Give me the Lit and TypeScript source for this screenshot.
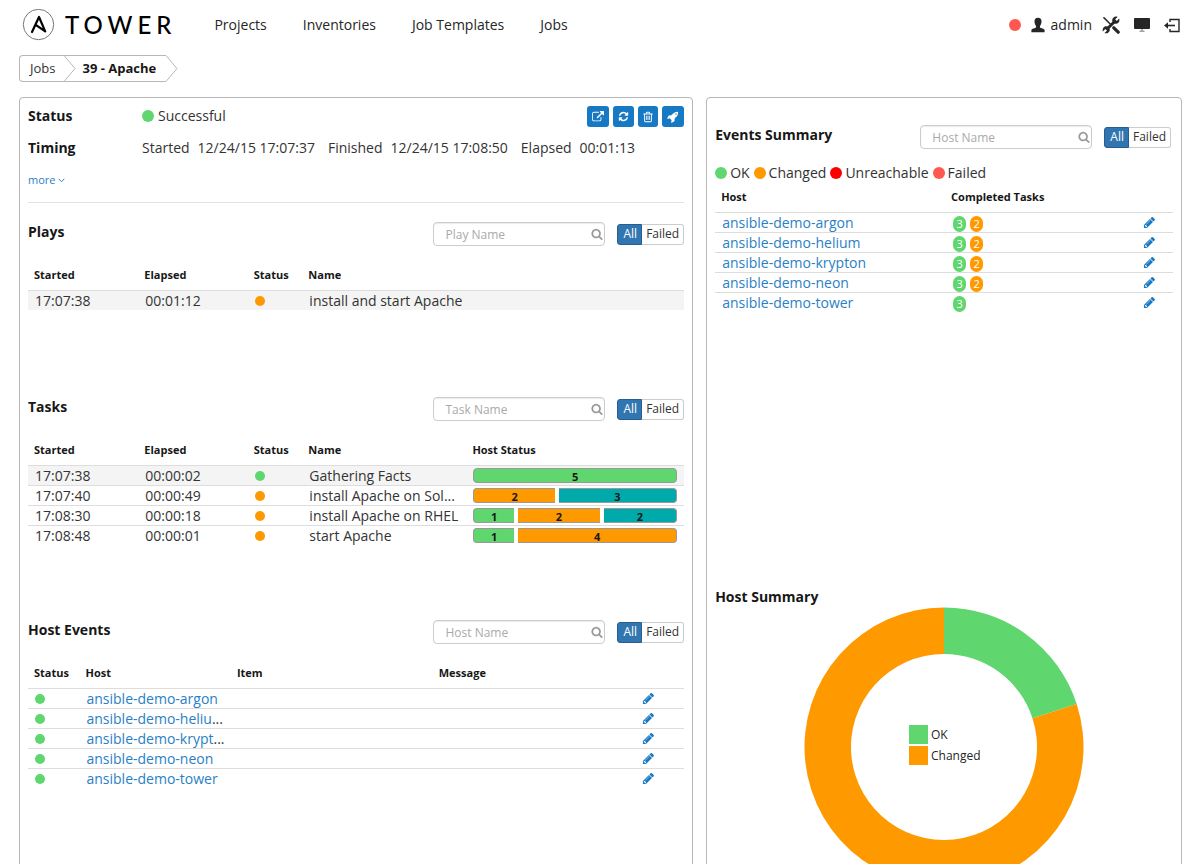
import { LitElement, html, css, svg, nothing } from "lit";
import { customElement, property } from "lit/decorators.js";
import { classMap } from "lit/directives/class-map.js";
import { styleMap } from "lit/directives/style-map.js";

type Tone = "ok" | "changed" | "unreachable" | "failed" | "skipped";

const ICONS = {
  pencil:
    "M491 1536l91-91-235-235-91 91v107h128v128h107zm523-928q0-22-22-22-10 0-17 7l-542 542q-7 7-7 17 0 22 22 22 10 0 17-7l542-542q7-7 7-17zm-54-192l416 416-832 832h-416v-416zm683 96q0 53-37 90l-166 166-416-416 166-165q36-38 90-38 53 0 91 38l235 234q37 39 37 91z",
  search:
    "M1216 832q0-185-131.5-316.5t-316.5-131.5-316.5 131.5-131.5 316.5 131.5 316.5 316.5 131.5 316.5-131.5 131.5-316.5zm512 832q0 52-38 90t-90 38q-54 0-90-38l-343-342q-179 124-399 124-143 0-273.5-55.5t-225-150-150-225-55.5-273.5 55.5-273.5 150-225 225-150 273.5-55.5 273.5 55.5 225 150 150 225 55.5 273.5q0 220-124 399l343 343q37 37 37 90z",
  refresh:
    "M1639 1056q0 5-1 7-64 268-268 434.5t-478 166.5q-146 0-282.5-55t-243.5-157l-129 129q-19 19-45 19t-45-19-19-45v-448q0-26 19-45t45-19h448q26 0 45 19t19 45-19 45l-137 137q71 66 161 102t187 36q134 0 250-65t186-179q11-17 53-117 8-23 30-23h192q13 0 22.5 9.5t9.5 22.5zm25-800v448q0 26-19 45t-45 19h-448q-26 0-45-19t-19-45 19-45l138-138q-148-137-349-137-134 0-250 65t-186 179q-11 17-53 117-8 23-30 23h-199q-13 0-22.5-9.5t-9.5-22.5v-7q65-268 270-434.5t480-166.5q146 0 284 55.5t245 156.5l130-129q19-19 45-19t45 19 19 45z",
  trash:
    "M704 736v576q0 14-9 23t-23 9h-64q-14 0-23-9t-9-23v-576q0-14 9-23t23-9h64q14 0 23 9t9 23zm256 0v576q0 14-9 23t-23 9h-64q-14 0-23-9t-9-23v-576q0-14 9-23t23-9h64q14 0 23 9t9 23zm256 0v576q0 14-9 23t-23 9h-64q-14 0-23-9t-9-23v-576q0-14 9-23t23-9h64q14 0 23 9t9 23zm128 724v-948h-896v948q0 22 7 40.5t14.5 27 10.5 8.5h832q3 0 10.5-8.5t14.5-27 7-40.5zm-672-1076h448l-48-117q-7-9-17-11h-317q-10 2-17 11zm928 32v64q0 14-9 23t-23 9h-96v948q0 83-47 143.5t-113 60.5h-832q-66 0-113-58.5t-47-141.5v-952h-96q-14 0-23-9t-9-23v-64q0-14 9-23t23-9h309l70-167q15-37 54-63t79-26h320q40 0 79 26t54 63l70 167h309q14 0 23 9t9 23z",
  external:
    "M1408 928v320q0 119-84.5 203.5t-203.5 84.5h-832q-119 0-203.5-84.5t-84.5-203.5v-832q0-119 84.5-203.5t203.5-84.5h704q14 0 23 9t9 23v64q0 14-9 23t-23 9h-704q-66 0-113 47t-47 113v832q0 66 47 113t113 47h832q66 0 113-47t47-113v-320q0-14 9-23t23-9h64q14 0 23 9t9 23zm384-864v512q0 26-19 45t-45 19-45-19l-176-176-652 652q-10 10-23 10t-23-10l-114-114q-10-10-10-23t10-23l652-652-176-176q-19-19-19-45t19-45 45-19h512q26 0 45 19t19 45z",
  rocket:
    "M1440 448q0-40-28-68t-68-28-68 28-28 68 28 68 68 28 68-28 28-68zm224-288q0 249-75.5 430.5t-253.5 360.5q-81 80-195 176l-20 379q-2 16-16 26l-384 224q-7 4-16 4-12 0-23-9l-64-64q-13-14-8-32l85-276-281-281-276 85q-3 1-9 1-14 0-23-9l-64-64q-17-19-5-39l224-384q10-14 26-16l379-20q96-114 176-195 188-187 358-258t431-71q14 0 24 9.5t10 22.5z",
};

const icon = (name: keyof typeof ICONS, size: number) => html`<svg
  class="icon"
  width=${size}
  height=${size}
  viewBox="0 0 1792 1792"
  aria-hidden="true"
>
  <path d=${ICONS[name]} fill="currentColor" />
</svg>`;

const base = css`
  *,
  *::before,
  *::after {
    box-sizing: border-box;
  }
  a {
    color: #2a80c5;
    text-decoration: none;
  }
  button {
    font: inherit;
    cursor: pointer;
  }
  .icon {
    display: block;
    flex: none;
  }
  .dot {
    display: inline-block;
    flex: none;
    width: 12px;
    height: 12px;
    border-radius: 50%;
  }
  .dot.small {
    display: block;
    width: 10px;
    height: 10px;
  }
  .ok {
    background: #60d66f;
  }
  .changed {
    background: #ff9900;
  }
  .unreachable {
    background: #ff0000;
  }
  .failed {
    background: #ff5850;
  }
  .skipped {
    background: #00aaaa;
  }
`;

@customElement("list-heading")
class ListHeading extends LitElement {
  @property() heading = "";
  @property() placeholder = "";

  static styles = [
    base,
    css`
      :host {
        display: flex;
        align-items: center;
        gap: 12px;
      }
      h2 {
        flex: 1;
        align-self: flex-start;
        margin: 0;
        font-size: 14px;
        line-height: 20px;
        color: #171717;
      }
      .search {
        position: relative;
        width: 172px;
      }
      input {
        display: block;
        width: 100%;
        height: 24px;
        padding: 0 24px 0 11px;
        border: 1px solid #ccc;
        border-radius: 4px;
        font: inherit;
        font-size: 12px;
        color: #333;
        box-shadow: inset 0 1px 1px rgba(0, 0, 0, 0.08);
      }
      input::placeholder {
        color: #aaa;
      }
      .search .icon {
        position: absolute;
        top: 6px;
        right: 2px;
        color: #999;
      }
      .toggle {
        display: flex;
      }
      .toggle button {
        height: 21px;
        padding: 0 4px;
        border: 1px solid #ccc;
        border-left: 0;
        border-radius: 0 3px 3px 0;
        background: #fff;
        color: #333;
        font-size: 12px;
        line-height: 18px;
      }
      .toggle .active {
        padding: 0 4px 0 5px;
        border: 1px solid #285e8e;
        border-radius: 3px 0 0 3px;
        background: #3276b1;
        color: #fff;
      }
    `,
  ];

  render() {
    return html`
      <h2>${this.heading}</h2>
      <div class="search">
        <input type="text" aria-label=${this.placeholder} placeholder=${this.placeholder} />
        ${icon("search", 12)}
      </div>
      <div class="toggle" role="group" aria-label="Filter">
        <button type="button" class="active" aria-pressed="true">All</button>
        <button type="button" aria-pressed="false">Failed</button>
      </div>
    `;
  }
}

@customElement("host-donut")
class HostDonut extends LitElement {
  @property({ attribute: false }) slices: { label: string; value: number; color: string }[] = [];

  static styles = css`
    :host {
      display: block;
    }
    svg {
      display: block;
      margin: 0 auto;
    }
    text {
      font-size: 12px;
      fill: #262626;
    }
  `;

  private arc(from: number, to: number) {
    const point = (r: number, t: number) =>
      `${(140 + r * Math.sin(t * 2 * Math.PI)).toFixed(2)} ${(140 - r * Math.cos(t * 2 * Math.PI)).toFixed(2)}`;
    const large = to - from > 0.5 ? 1 : 0;
    return `M${point(139.5, from)}A139.5 139.5 0 ${large} 1 ${point(139.5, to)}L${point(93, to)}A93 93 0 ${large} 0 ${point(93, from)}Z`;
  }

  render() {
    const total = this.slices.reduce((sum, s) => sum + s.value, 0);
    let start = 0;
    const arcs = this.slices.map((s) => {
      const from = start;
      start += s.value / total;
      return svg`<path d=${this.arc(from, start)} fill=${s.color} />`;
    });
    return html`<svg width="280" height="280" viewBox="0 0 280 280" role="img" aria-label="Host Summary">
      ${arcs}
      ${this.slices.map(
        (s, i) => svg`
          <rect x="105" y=${118 + i * 21} width="19" height="19" fill=${s.color} />
          <text x="127" y=${132 + i * 21}>${s.label}</text>`,
      )}
    </svg>`;
  }
}

@customElement("app-root")
class AppRoot extends LitElement {
  private tasks: { start: string; elapsed: string; status: Tone; name: string; hosts: [Tone, number][] }[] = [
    { start: "17:07:38", elapsed: "00:00:02", status: "ok", name: "Gathering Facts", hosts: [["ok", 5]] },
    {
      start: "17:07:40",
      elapsed: "00:00:49",
      status: "changed",
      name: "install Apache on Sol...",
      hosts: [["changed", 2], ["skipped", 3]],
    },
    {
      start: "17:08:30",
      elapsed: "00:00:18",
      status: "changed",
      name: "install Apache on RHEL",
      hosts: [["ok", 1], ["changed", 2], ["skipped", 2]],
    },
    { start: "17:08:48", elapsed: "00:00:01", status: "changed", name: "start Apache", hosts: [["ok", 1], ["changed", 4]] },
  ];

  private hosts: { name: string; short?: string; ok: number; changed: number }[] = [
    { name: "ansible-demo-argon", ok: 3, changed: 2 },
    { name: "ansible-demo-helium", short: "ansible-demo-heliu", ok: 3, changed: 2 },
    { name: "ansible-demo-krypton", short: "ansible-demo-krypt", ok: 3, changed: 2 },
    { name: "ansible-demo-neon", ok: 3, changed: 2 },
    { name: "ansible-demo-tower", ok: 3, changed: 0 },
  ];

  static styles = [
    base,
    css`
      :host {
        display: block;
        height: 100vh;
        overflow-y: auto;
        scrollbar-width: none;
        background: #fff;
        color: #333;
        font-family: "Open Sans", "Noto Sans", sans-serif;
        font-size: 14px;
        line-height: 20px;
      }
      .topbar {
        display: flex;
        align-items: center;
        height: 50px;
        padding: 0 20px 0 22px;
      }
      .brand {
        display: flex;
        align-items: center;
        gap: 10px;
        margin-right: 38px;
        color: #000;
      }
      .wordmark {
        font-family: Lato, sans-serif;
        font-size: 24px;
        font-weight: 500;
        line-height: 32px;
        letter-spacing: 5px;
      }
      .nav {
        display: flex;
        flex: 1;
        gap: 36px;
      }
      .nav a,
      .tools a {
        color: #262626;
      }
      .tools {
        display: flex;
        align-items: center;
        gap: 14px;
      }
      .user {
        display: flex;
        align-items: center;
        gap: 6px;
      }
      .tools svg {
        display: block;
      }
      .tools .user,
      .tools .settings {
        margin-left: -4px;
      }
      .crumbs {
        display: flex;
        margin: 5px 19px 15px;
        padding: 0;
        list-style: none;
        font-size: 13px;
        line-height: 25px;
      }
      .crumbs li {
        display: flex;
      }
      .crumbs span,
      .crumbs a {
        border: 1px solid #b7b7b7;
        border-width: 1px 0;
        padding: 0 10px 0 6px;
        color: #171717;
      }
      .crumbs a {
        border-left-width: 1px;
        border-radius: 4px 0 0 4px;
        padding: 0 9px 0 10px;
        color: #333;
      }
      .crumbs span {
        font-weight: 700;
      }
      .crumbs svg {
        display: block;
      }
      .columns {
        display: grid;
        grid-template-columns: 17fr 12fr;
        gap: 13px;
        padding: 0 18px 20px 19px;
      }
      .panel {
        min-width: 0;
        padding: 8px;
        border: 1px solid #b7b7b7;
        border-radius: 4px;
      }
      .facts {
        display: grid;
        grid-template-columns: 114px 1fr auto;
        row-gap: 12px;
        margin: 0;
        border-bottom: 1px solid #e3e3e3;
        padding-bottom: 12px;
      }
      .label {
        font-weight: 700;
        color: #171717;
      }
      .status {
        display: flex;
        align-items: center;
        gap: 4px;
      }
      .timing {
        display: flex;
        grid-column: 2 / 4;
        gap: 13px;
      }
      .timing span {
        display: flex;
        gap: 8px;
      }
      .more {
        display: flex;
        align-items: center;
        gap: 3px;
        font-size: 11px;
      }
      .actions {
        display: flex;
        gap: 4px;
        height: 21px;
        margin-bottom: -1px;
      }
      .actions button {
        display: grid;
        place-items: center;
        padding: 0 5px;
        border: 0;
        border-radius: 3px;
        background: #1778c3;
        color: #fff;
      }
      .actions .delete {
        padding: 0 4px;
      }
      .list {
        margin-top: 19px;
      }
      .rows {
        padding-top: 10px;
      }
      .plays {
        min-height: 132px;
      }
      .tasks {
        min-height: 180px;
      }
      .events {
        min-height: 260px;
      }
      table {
        width: 100%;
        table-layout: fixed;
        border-collapse: separate;
        border-spacing: 0;
      }
      th {
        padding: 9px 0 5px 6px;
        text-align: left;
        font-size: 11px;
        line-height: 20px;
        white-space: nowrap;
        color: #171717;
      }
      td {
        height: 20px;
        padding: 0 0 0 7px;
        border-top: 1px solid #ddd;
        line-height: 19px;
        white-space: nowrap;
      }
      th + th {
        padding-left: 7px;
      }
      td + td {
        padding-left: 8px;
      }
      .selected td {
        background: #f4f4f4;
      }
      .w1 {
        width: 8.3333%;
      }
      .w2 {
        width: 16.6667%;
      }
      .w3 {
        width: 25%;
      }
      .w4 {
        width: 33.3333%;
      }
      .w6 {
        width: 50%;
      }
      .w5 {
        width: 41.6667%;
      }
      .e1 {
        width: 7.6923%;
      }
      .e3 {
        width: 23.0769%;
      }
      .e4 {
        width: 30.7692%;
      }
      .edit {
        display: block;
        width: 13px;
        color: #1778c3;
      }
      .bar {
        display: flex;
        gap: 4px;
        height: 15px;
        margin-right: 7px;
        font-size: 11px;
        font-weight: 700;
        line-height: 16px;
        text-align: center;
        color: #171717;
      }
      .seg {
        flex: none;
        border: 1px solid #999;
        border-width: 1px 0;
      }
      .seg:first-child {
        border-left-width: 1px;
        border-radius: 4px 0 0 4px;
      }
      .seg:last-child {
        flex: 1;
        border-right-width: 1px;
        border-radius: 0 4px 4px 0;
      }
      .seg:only-child {
        border-radius: 4px;
      }
      .summary {
        padding-top: 27px;
      }
      .summary list-heading {
        padding-right: 2px;
      }
      .legend {
        display: flex;
        gap: 4px;
        margin-top: 14px;
      }
      .legend span {
        display: flex;
        align-items: center;
        gap: 3px;
      }
      .hosts {
        min-height: 404px;
      }
      .hosts th {
        padding-top: 4px;
      }
      .badges {
        display: flex;
        gap: 4px;
        padding: 3px 0 0 1px;
      }
      .badge {
        width: 13px;
        height: 16px;
        border-radius: 7px;
        font-size: 11px;
        line-height: 15px;
        text-align: center;
        color: #fff;
      }
      .title {
        margin: 0;
        font-size: 14px;
        line-height: 20px;
        color: #171717;
      }
    `,
  ];

  private dot(tone: Tone, small = false) {
    return html`<i class=${classMap({ dot: true, small, [tone]: true })}></i>`;
  }

  private edit(name: string) {
    return html`<a class="edit" href="#" aria-label="Edit ${name}">${icon("pencil", 13)}</a>`;
  }

  private bar(hosts: [Tone, number][]) {
    const total = hosts.reduce((sum, h) => sum + h[1], 0);
    return html`<div class="bar">
      ${hosts.map(
        ([tone, n], i) => html`<div
          class=${classMap({ seg: true, [tone]: true })}
          style=${i < hosts.length - 1 ? styleMap({ width: `${(n / total) * 100}%` }) : nothing}
        >
          ${n}
        </div>`,
      )}
    </div>`;
  }

  private header() {
    return html`<header class="topbar">
      <a class="brand" href="#">
        <svg width="33" height="32" viewBox="0 0 33 32" aria-hidden="true">
          <circle cx="16.5" cy="15.5" r="15.2" fill="none" stroke="#777" />
          <path
            d="M10 23L17 8L23.2 22.4L13.4 15.6"
            fill="none"
            stroke="#000"
            stroke-width="2.2"
            stroke-linejoin="round"
            stroke-linecap="round"
          />
        </svg>
        <span class="wordmark">TOWER</span>
      </a>
      <nav class="nav">
        <a href="#">Projects</a>
        <a href="#">Inventories</a>
        <a href="#">Job Templates</a>
        <a href="#">Jobs</a>
      </nav>
      <div class="tools">
        ${this.dot("failed")}
        <a class="user" href="#">
          <svg width="14" height="16" viewBox="0 0 14 16" aria-hidden="true">
            <path
              d="M7 .8C4.7.8 3.3 2.3 3.5 4.7C3.6 6.7 4.3 8 5 8.8V10.4C4.2 11.2.7 11.6.4 13V15.2H13.6V13C13.3 11.6 9.8 11.2 9 10.4V8.8C9.7 8 10.4 6.7 10.5 4.7C10.7 2.3 9.3.8 7 .8Z"
              fill="#262626"
            />
          </svg>
          admin
        </a>
        <a class="settings" href="#" aria-label="Setup">
          <svg width="18" height="18" viewBox="0 0 18 18" aria-hidden="true">
            <path d="M1 1L2.6 1.2L10 8.8L9 9.8L1.6 2.6Z" fill="#262626" />
            <path d="M11.8 11.8L16.2 16.2" stroke="#262626" stroke-width="3.2" stroke-linecap="round" />
            <path d="M5 13L13 5.2" stroke="#262626" stroke-width="3" />
            <path
              d="M15.6.9L13.1 3.3L14.8 5L17.2 2.6C17.8 4.6 17 6.8 15 7.6C12.9 8.4 10.2 6.7 10.2 4.5C10.1 2 12.8-.2 15.6.9Z"
              fill="#262626"
            />
            <path
              d="M2.5 17.1L5 14.7L3.3 13L.9 15.4C.2 13.4 1 11.2 3 10.4C5.1 9.6 7.8 11.3 7.8 13.5C7.9 16 5.3 18.1 2.5 17.1Z"
              fill="#262626"
            />
          </svg>
        </a>
        <a href="#" aria-label="Portal mode">
          <svg width="16" height="14" viewBox="0 0 16 14" aria-hidden="true">
            <rect y="0" width="16" height="11" rx="1" fill="#262626" />
            <path d="M8 11V13M5.5 13.2H10.5" stroke="#777" stroke-width="1" />
          </svg>
        </a>
        <a href="#" aria-label="Log out">
          <svg width="16" height="15" viewBox="0 0 16 15" aria-hidden="true">
            <path d="M6 4V1.5H15V13.5H6V11" fill="none" stroke="#262626" stroke-width="1.4" />
            <path d="M2.5 7.5H11" stroke="#262626" stroke-width="1.6" />
            <path d="M0 7.5L4 4.2V10.8Z" fill="#262626" />
          </svg>
        </a>
      </div>
    </header>`;
  }

  private details() {
    return html`
      <div class="facts">
        <span class="label">Status</span>
        <span class="status">${this.dot("ok")} Successful</span>
        <div class="actions">
          <button type="button" aria-label="Open output">${icon("external", 12)}</button>
          <button type="button" aria-label="Refresh">${icon("refresh", 11)}</button>
          <button type="button" class="delete" aria-label="Delete">${icon("trash", 12)}</button>
          <button type="button" aria-label="Relaunch">${icon("rocket", 12)}</button>
        </div>
        <span class="label">Timing</span>
        <div class="timing">
          <span><span>Started</span> <span>12/24/15 17:07:37</span></span>
          <span><span>Finished</span> <span>12/24/15 17:08:50</span></span>
          <span><span>Elapsed</span> <span>00:01:13</span></span>
        </div>
        <a class="more" href="#">
          more
          <svg width="7" height="5" viewBox="0 0 7 5" aria-hidden="true">
            <path d="M.7.8L3.5 3.7L6.3.8" fill="none" stroke="currentColor" />
          </svg>
        </a>
      </div>
    `;
  }

  render() {
    return html`
      ${this.header()}
      <ol class="crumbs">
        <li>
          <a href="#">Jobs</a>
          <svg width="12" height="27" viewBox="0 0 12 27" aria-hidden="true">
            <path d="M0 .5H12M0 26.5H12M0 .5L11 13.5L0 26.5" fill="none" stroke="#b7b7b7" />
          </svg>
        </li>
        <li>
          <span>39 - Apache</span>
          <svg width="12" height="27" viewBox="0 0 12 27" aria-hidden="true">
            <path d="M0 .5L11 13.5L0 26.5" fill="none" stroke="#b7b7b7" />
          </svg>
        </li>
      </ol>
      <main class="columns">
        <section class="panel">
          ${this.details()}
          <list-heading class="list" heading="Plays" placeholder="Play Name"></list-heading>
          <div class="rows plays">
            <table>
              <colgroup>
                <col class="w2" /><col class="w2" /><col class="w1" /><col />
              </colgroup>
              <thead>
                <tr><th>Started</th><th>Elapsed</th><th>Status</th><th>Name</th></tr>
              </thead>
              <tbody>
                <tr class="selected">
                  <td>17:07:38</td>
                  <td>00:01:12</td>
                  <td>${this.dot("changed", true)}</td>
                  <td>install and start Apache</td>
                </tr>
              </tbody>
            </table>
          </div>
          <list-heading class="list" heading="Tasks" placeholder="Task Name"></list-heading>
          <div class="rows tasks">
            <table>
              <colgroup>
                <col class="w2" /><col class="w2" /><col class="w1" /><col class="w3" /><col class="w4" />
              </colgroup>
              <thead>
                <tr><th>Started</th><th>Elapsed</th><th>Status</th><th>Name</th><th>Host Status</th></tr>
              </thead>
              <tbody>
                ${this.tasks.map(
                  (t, i) => html`<tr class=${i === 0 ? "selected" : ""}>
                    <td>${t.start}</td>
                    <td>${t.elapsed}</td>
                    <td>${this.dot(t.status, true)}</td>
                    <td>${t.name}</td>
                    <td>${this.bar(t.hosts)}</td>
                  </tr>`,
                )}
              </tbody>
            </table>
          </div>
          <list-heading class="list" heading="Host Events" placeholder="Host Name"></list-heading>
          <div class="rows events">
            <table>
              <colgroup>
                <col class="e1" /><col class="e3" /><col class="e4" /><col class="e4" /><col class="e1" />
              </colgroup>
              <thead>
                <tr><th>Status</th><th>Host</th><th>Item</th><th>Message</th><th></th></tr>
              </thead>
              <tbody>
                ${this.hosts.map(
                  (h) => html`<tr>
                    <td>${this.dot("ok", true)}</td>
                    <td><a href="#">${h.short ?? h.name}</a>${h.short ? "..." : nothing}</td>
                    <td></td>
                    <td></td>
                    <td>${this.edit(h.name)}</td>
                  </tr>`,
                )}
              </tbody>
            </table>
          </div>
        </section>
        <section class="panel summary">
          <list-heading heading="Events Summary" placeholder="Host Name"></list-heading>
          <div class="legend">
            <span>${this.dot("ok")} OK</span>
            <span>${this.dot("changed")} Changed</span>
            <span>${this.dot("unreachable")} Unreachable</span>
            <span>${this.dot("failed")} Failed</span>
          </div>
          <div class="hosts">
            <table>
              <colgroup>
                <col class="w6" /><col class="w5" /><col class="w1" />
              </colgroup>
              <thead>
                <tr><th>Host</th><th>Completed Tasks</th><th></th></tr>
              </thead>
              <tbody>
                ${this.hosts.map(
                  (h) => html`<tr>
                    <td><a href="#">${h.name}</a></td>
                    <td>
                      <div class="badges">
                        <span class="badge ok">${h.ok}</span>
                        ${h.changed ? html`<span class="badge changed">${h.changed}</span>` : nothing}
                      </div>
                    </td>
                    <td>${this.edit(h.name)}</td>
                  </tr>`,
                )}
              </tbody>
            </table>
          </div>
          <h2 class="title">Host Summary</h2>
          <host-donut
            .slices=${[
              { label: "OK", value: 1, color: "#60d66f" },
              { label: "Changed", value: 4, color: "#ff9900" },
            ]}
          ></host-donut>
        </section>
      </main>
    `;
  }
}
